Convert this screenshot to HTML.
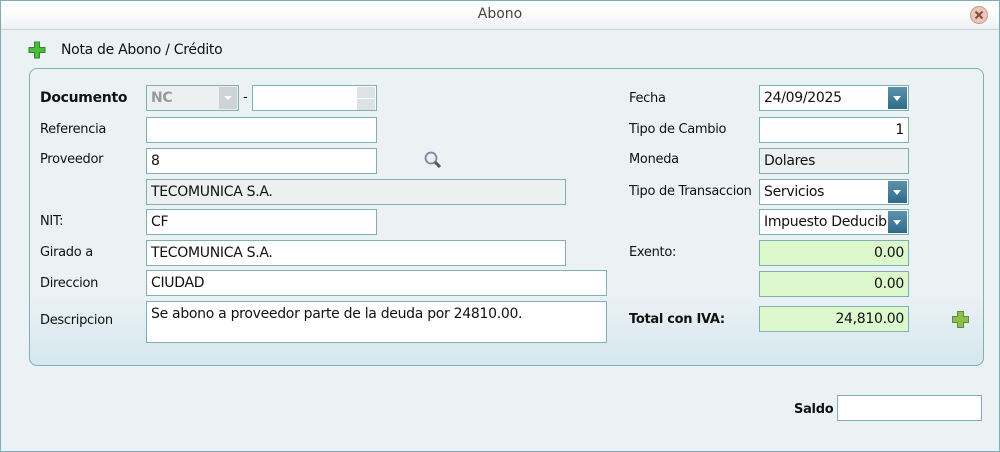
<!DOCTYPE html>
<html><head><meta charset="utf-8"><style>
*{box-sizing:border-box;margin:0;padding:0}
body{width:1000px;height:452px;overflow:hidden;font-family:"DejaVu Sans","Liberation Sans",sans-serif;font-size:13px;color:#111;background:#fff}
.win{position:absolute;left:0;top:0;width:1000px;height:452px;background:#ecf2f4}
.frame{position:absolute;left:0;top:0;width:1000px;height:452px;border:1px solid #7aaeb3;pointer-events:none}
.title{position:absolute;left:0;top:0;width:1000px;height:30px;background:linear-gradient(#fff 0,#fff 35%,#eef1f2 100%);border-bottom:1px solid #cfd6d8;text-align:center;line-height:29px;font-size:14px;color:#444}
.a{position:absolute}
.lbl{position:absolute;font-size:13px;letter-spacing:-0.3px}
.in{position:absolute;border:1px solid #7fb0b4;background:#fff;height:26px;line-height:24px;padding:0 4px;font-size:14px;letter-spacing:-0.3px}
.g{background:#ecf0f1}
.gr{background:#dcf8cc;text-align:right}
.dd{position:absolute;right:1px;top:1px;width:19px;height:22px;background:linear-gradient(#5b93ad,#2e6b89)}
.dd:after{content:"";position:absolute;left:5px;top:9px;border-left:4.5px solid transparent;border-right:4.5px solid transparent;border-top:5px solid #fff}
.panel{position:absolute;left:29px;top:68px;width:955px;height:298px;border:1px solid #7fb0b4;border-radius:8px;background:linear-gradient(#ecf2f4 0,#ecf2f4 75%,#d6e7ef 100%)}
</style></head><body>
<div class="win">
<div class="title">Abono</div>
<svg class="a" style="left:969px;top:5px" width="20" height="20" viewBox="0 0 20 20"><circle cx="10" cy="10" r="8.5" fill="#e8c8b8" stroke="#c89a88"/><path d="M6.5 6.5l7 7M13.5 6.5l-7 7" stroke="#8a4a3a" stroke-width="2"/></svg>
<svg class="a" style="left:28px;top:41px" width="18" height="18" viewBox="0 0 18 18"><path d="M6.5 1h5v5.5H17v5h-5.5V17h-5v-5.5H1v-5h5.5z" fill="#4cbb3e" stroke="#2f8a2a"/></svg>
<div class="lbl" style="left:61px;top:42px;font-size:14px">Nota de Abono / Crédito</div>
<div class="panel"></div>

<div class="lbl" style="left:40px;top:90px;font-weight:bold;font-size:14px">Documento</div>
<div class="in g" style="left:146px;top:85px;width:93px;color:#999;font-weight:bold">NC<div style="position:absolute;right:1px;top:1px;width:18px;height:22px;background:#cdd3d6"></div><div style="position:absolute;right:6px;top:10px;border-left:4px solid transparent;border-right:4px solid transparent;border-top:4px solid #fff"></div></div>
<div class="lbl" style="left:243px;top:90px">-</div>
<div class="in" style="left:252px;top:85px;width:125px"><div style="position:absolute;right:1px;top:1px;width:18px;height:11px;background:#dde2e4"></div><div style="position:absolute;right:1px;top:13px;width:18px;height:11px;background:#dde2e4"></div></div>

<div class="lbl" style="left:40px;top:122px">Referencia</div>
<div class="in" style="left:146px;top:117px;width:231px"></div>
<div class="lbl" style="left:40px;top:152px">Proveedor</div>
<div class="in" style="left:146px;top:148px;width:231px">8</div>
<svg class="a" style="left:423px;top:150px" width="20" height="20" viewBox="0 0 20 20"><circle cx="8" cy="8" r="5.5" fill="#e6f0f8" stroke="#7a8a99" stroke-width="1.8"/><path d="M12 12l5 5" stroke="#555" stroke-width="3"/></svg>
<div class="in g" style="left:146px;top:179px;width:420px">TECOMUNICA S.A.</div>
<div class="lbl" style="left:40px;top:214px">NIT:</div>
<div class="in" style="left:146px;top:209px;width:231px">CF</div>
<div class="lbl" style="left:40px;top:245px">Girado a</div>
<div class="in" style="left:146px;top:240px;width:420px">TECOMUNICA S.A.</div>
<div class="lbl" style="left:40px;top:276px">Direccion</div>
<div class="in" style="left:146px;top:270px;width:461px">CIUDAD</div>
<div class="lbl" style="left:40px;top:313px">Descripcion</div>
<div class="in" style="left:146px;top:301px;width:461px;height:42px;line-height:20px;padding-top:2px">Se abono a proveedor parte de la deuda por 24810.00.</div>

<div class="lbl" style="left:629px;top:91px">Fecha</div>
<div class="in" style="left:759px;top:85px;width:150px">24/09/2025<div class="dd"></div></div>
<div class="lbl" style="left:629px;top:122px">Tipo de Cambio</div>
<div class="in" style="left:759px;top:117px;width:150px;text-align:right">1</div>
<div class="lbl" style="left:629px;top:152px">Moneda</div>
<div class="in g" style="left:759px;top:148px;width:150px">Dolares</div>
<div class="lbl" style="left:629px;top:184px">Tipo de Transaccion</div>
<div class="in" style="left:759px;top:179px;width:150px">Servicios<div class="dd"></div></div>
<div class="in" style="left:759px;top:209px;width:150px;overflow:hidden;white-space:nowrap">Impuesto Deducible<div class="dd"></div></div>
<div class="lbl" style="left:629px;top:245px">Exento:</div>
<div class="in gr" style="left:759px;top:240px;width:150px">0.00</div>
<div class="in gr" style="left:759px;top:271px;width:150px">0.00</div>
<div class="lbl" style="left:629px;top:312px;font-weight:bold">Total con IVA:</div>
<div class="in gr" style="left:759px;top:306px;width:150px">24,810.00</div>
<svg class="a" style="left:951px;top:310px" width="19" height="19" viewBox="0 0 19 19"><path d="M6.5 1.5h6v5h5v6h-5v5h-6v-5h-5v-6h5z" fill="#8cbf4c" stroke="#5f8a35" stroke-linejoin="round"/></svg>

<div class="lbl" style="left:794px;top:402px;font-weight:bold">Saldo</div>
<div class="in" style="left:837px;top:395px;width:145px"></div>
</div>
<div class="frame"></div>
</body></html>
